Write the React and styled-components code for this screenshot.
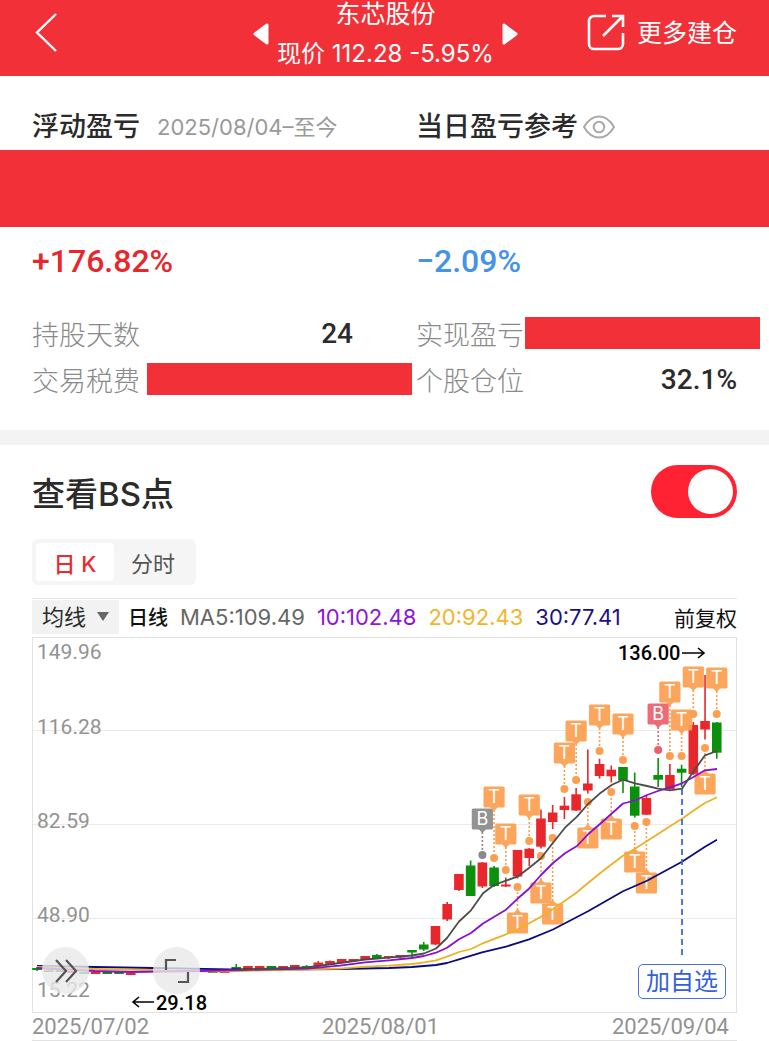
import { useState } from "react";
import styled, { createGlobalStyle } from "styled-components";

const RED = "#e8272c";
const GREEN = "#0a900a";
const ORANGE = "#fc9f50";
const STEP = 11.72;
const FIRST_X = 37;

const slotX = (slot) => FIRST_X + slot * STEP;

// slot, high, top, bottom, low, rising
const candles = [
  [0, 967, 968, 970, 971, 0],
  [1, 970, 970, 972, 972, 0],
  [2, 970, 970, 972, 972, 0],
  [3, 971, 971, 973, 973, 1],
  [4, 972, 972, 974, 974, 0],
  [5, 972, 972, 974, 974, 1],
  [6, 972, 972, 974, 974, 0],
  [7, 972, 972, 974, 974, 0],
  [8, 973, 973, 975, 975, 1],
  [15, 971, 971, 973, 973, 0],
  [16, 971, 971, 973, 973, 1],
  [17, 964, 967, 969, 969, 0],
  [18, 966, 966, 969, 969, 1],
  [19, 966, 966, 969, 969, 1],
  [20, 966, 966, 968, 968, 0],
  [21, 966, 966, 968, 968, 1],
  [22, 965, 965, 967, 967, 1],
  [23, 965, 966, 967, 968, 0],
  [24, 961, 962.5, 966, 966, 1],
  [25, 960.5, 961, 965, 965, 1],
  [26, 959, 959, 963, 963, 1],
  [27, 959, 959, 961, 962, 1],
  [28, 956, 956, 960, 960, 1],
  [29, 954, 955, 958.5, 959, 0],
  [30, 956, 956, 958, 959, 1],
  [31, 955, 955, 957.5, 959, 1],
  [32, 950, 950, 952.5, 958, 0],
  [33, 942, 944.5, 949.5, 951, 0],
  [34, 926, 926, 944.5, 945, 1],
  [35, 902, 904, 919.5, 921, 1],
  [36, 874, 874, 890, 891, 1],
  [37, 860.5, 865.5, 896, 896, 0],
  [38, 862, 862.5, 886.5, 888, 1],
  [39, 866, 867.5, 886, 887, 0],
  [40, 877.5, 884.5, 886.5, 887, 1],
  [41, 850, 850, 876.5, 878.5, 1],
  [42, 848, 848.7, 858, 866, 1],
  [43, 809.5, 818.5, 846.7, 848.5, 1],
  [44, 805, 812.5, 822, 829, 1],
  [45, 797, 805.7, 810, 819, 1],
  [46, 788, 794.3, 810.5, 811, 1],
  [47, 749.5, 783.5, 790.5, 793.5, 1],
  [48, 758.7, 764, 776, 778.5, 1],
  [49, 765.5, 769.7, 776.3, 782.5, 1],
  [50, 767, 767, 780.7, 793, 0],
  [51, 772.5, 786.5, 815.7, 817.5, 0],
  [52, 795, 798, 814.7, 815, 1],
  [53, 758, 775, 779.7, 787, 0],
  [54, 764, 775, 789, 790, 1],
  [55, 764.7, 768.7, 772.7, 787, 0],
  [56, 722, 725, 774, 775, 1],
  [57, 675, 721, 729.5, 739.5, 1],
  [58, 722, 722.5, 752.7, 758.7, 0],
];

const averages = [
  {
    color: "#0b0b7c",
    points:
      "37,966 95,967 153,968 230,969.3 280,969.7 340,969 389,968 412,967 436,965 447,963 459,959.3 482,952.3 506,946.7 529,939.3 553,929.5 565,923.3 588,911.3 623,891.3 647,880.7 682,861.7 705,846.7 717,839.7",
  },
  {
    color: "#ecb225",
    points:
      "37,967 95,969 150,970 213,971.5 240,971 340,968.7 365,966.7 389,965.7 412,964 424,962.3 436,960.3 447,956.7 459,952 471,949 482,943.7 506,934.3 518,929 529,923.3 541,916.7 553,909 565,900.7 577,892.3 588,883 600,873.3 612,864 623,855.7 635,848.7 658,834 670,826.3 682,818.7 693,811 705,803 717,797.3",
  },
  {
    color: "#8a0fd2",
    points:
      "37,968 95,971 131,972 200,971 240,970 307,968.7 340,965.7 365,962.3 389,960.3 412,958 424,956 436,952.7 447,947.7 459,939.3 471,933 483,923.5 506,909.7 518,898.3 529,888.7 541,875 553,863 565,853.3 577,846 588,834.3 600,824 623,803.5 635,800.5 647,795 658,791 670,787.3 682,783.3 693,777.3 705,770.3 717,769",
  },
  {
    color: "#4c4c4c",
    points:
      "240,969.7 307,967.5 340,963 365,959.5 389,957.7 412,955.5 424,953.5 436,948.5 447,938 459,921.5 471,910.3 483,893.3 494,885 506,880.7 518,876.3 529,868 541,858.3 553,842.7 565,827.7 577,816.7 588,804 600,793.3 612,784.7 623,779.7 635,783.3 647,786 658,788.7 670,790.3 682,788.7 693,772 705,755.3 717,751",
  },
];

const marks = [
  { slot: 38, box: 819, dot: 855, text: "B", color: "#8a8a8a" },
  { slot: 39, box: 797, dot: 858 },
  { slot: 40, box: 834, dot: 870 },
  { slot: 42, box: 805, dot: 841 },
  { slot: 41, box: 923, dot: 887 },
  { slot: 43, box: 893, dot: 856 },
  { slot: 44, box: 914, dot: 838 },
  { slot: 45, box: 753, dot: 789 },
  { slot: 46, box: 731, dot: 780 },
  { slot: 48, box: 715, dot: 751 },
  { slot: 50, box: 724, dot: 760 },
  { slot: 47, box: 838, dot: 802 },
  { slot: 49, box: 829, dot: 792 },
  { slot: 51, box: 862, dot: 826 },
  { slot: 52, box: 883, dot: 822 },
  { slot: 54, box: 692, dot: 756 },
  { slot: 53, box: 714, dot: 750, text: "B", color: "#ec5f6c" },
  { slot: 55, box: 720, dot: 756 },
  { slot: 56, box: 677, dot: 714 },
  { slot: 58, box: 678, dot: 714 },
  { slot: 57, box: 784, dot: 748 },
];

const scale = [
  ["149.96", 659],
  ["116.28", 734],
  ["82.59", 828],
  ["48.90", 922],
  ["15.22", 997],
];

const Mark = ({ slot, box, dot, text = "T", color = ORANGE }) => {
  const x = slotX(slot);
  const side = dot > box ? 1 : -1;
  const edge = box + side * 10;

  return (
    <g>
      <path d={`M${x} ${edge + side * 3}V${dot}`} stroke={color} strokeWidth="1.6" strokeDasharray="2 2" />
      <circle cx={x} cy={dot} r="4" fill={color} />
      <g opacity="0.92">
        <rect x={x - 10.6} y={box - 10.6} width="21.2" height="21.2" rx="1.5" fill={color} />
        <path d={`M${x - 4} ${edge}h8l-4 ${side * 4}z`} fill={color} />
      </g>
      <MarkText x={x} y={box + 6}>{text}</MarkText>
    </g>
  )
};

const Chart = () => (
  <ChartSvg viewBox="32 637 705 377">
    <path d="M32 730.5H736M32 824.5H736M32 918.5H736" stroke="#ebebeb" />
    <rect x="32.5" y="637.5" width="704" height="375" fill="none" stroke="#e2e2e2" />
    {candles.map(([slot, high, top, bottom, low, rising]) => (
      <g key={slot} fill={rising ? RED : GREEN}>
        <rect x={slotX(slot) - 0.8} y={high} width="1.6" height={low - high} />
        <rect x={slotX(slot) - 4.8} y={top} width="9.6" height={bottom - top} />
      </g>
    ))}
    {marks.map((mark) => (
      <Mark key={mark.slot} {...mark} />
    ))}
    {averages.map(({ color, points }) => (
      <polyline key={color} points={points} fill="none" stroke={color} strokeWidth="1.8" strokeLinejoin="round" />
    ))}
    <path d="M682 789V956" stroke="#3c66e0" strokeWidth="1.8" strokeDasharray="6 4" />
    {scale.map(([label, y]) => (
      <ScaleText key={label} x="37" y={y}>{label}</ScaleText>
    ))}
    <PeakText x="618" y="660">136.00</PeakText>
    <path d="M682 653H704M698 648l6 5-6 5" fill="none" stroke="#000" strokeWidth="1.6" />
    <PeakText x="156" y="1010">29.18</PeakText>
    <path d="M154 1002H133M139 997l-6 5 6 5" fill="none" stroke="#000" strokeWidth="1.6" />
  </ChartSvg>
);

const App = () => {
  const [showPoints, setShowPoints] = useState(true);
  const [period, setPeriod] = useState("day");

  return (
    <>
      <GlobalStyle />
      <Header>
        <HeaderSide>
          <IconButton aria-label="返回">
            <svg width="24" height="42" viewBox="0 0 24 42" fill="none" stroke="#fff" strokeWidth="2.4">
              <path d="M22 2 3 20.500 22 39" />
            </svg>
          </IconButton>
        </HeaderSide>
        <Stock>
          <IconButton aria-label="上一只">
            <svg width="16" height="22" viewBox="0 0 16 22" fill="#fff" stroke="#fff" strokeWidth="3" strokeLinejoin="round">
              <path d="M14 2v18L2 11z" />
            </svg>
          </IconButton>
          <StockText>
            <StockName>东芯股份</StockName>
            <StockPrice>现价 112.28 -5.95%</StockPrice>
          </StockText>
          <IconButton aria-label="下一只">
            <svg width="16" height="22" viewBox="0 0 16 22" fill="#fff" stroke="#fff" strokeWidth="3" strokeLinejoin="round">
              <path d="M2 2v18l12-9z" />
            </svg>
          </IconButton>
        </Stock>
        <HeaderSide $end>
          <MoreButton>
            <svg width="38" height="38" viewBox="0 0 38 38" fill="none" stroke="#fff" strokeWidth="2.6">
              <path d="M19 2H7a5 5 0 0 0-5 5v23a5 5 0 0 0 5 5h24a5 5 0 0 0 5-5V19" />
              <path d="M25 2h11v11M36 2 16 22" />
            </svg>
            更多建仓
          </MoreButton>
        </HeaderSide>
      </Header>

      <Columns $top={35}>
        <Heading>
          浮动盈亏
          <DateRange>2025/08/04–至今</DateRange>
        </Heading>
        <Heading>
          当日盈亏参考
          <IconButton aria-label="隐藏金额">
            <svg width="32" height="24" viewBox="0 0 32 24" fill="none" stroke="#a9a9a9" strokeWidth="2">
              <path d="M1 12C5 5 10 1.500 16 1.500S27 5 31 12C27 19 22 22.500 16 22.500S5 19 1 12z" />
              <circle cx="16" cy="12" r="5.300" />
            </svg>
          </IconButton>
        </Heading>
      </Columns>
      <Banner />
      <Columns $top={14}>
        <Percent $color={RED}>+176.82%</Percent>
        <Percent $color="#4593e6">−2.09%</Percent>
      </Columns>
      <Columns $top={29}>
        <Stat>
          <StatLabel>持股天数</StatLabel>
          <StatValue>24</StatValue>
        </Stat>
        <Stat>
          <StatLabel>实现盈亏</StatLabel>
          <Cover $start={1} $bleed={23} />
        </Stat>
        <Stat>
          <StatLabel>交易税费</StatLabel>
          <Cover $start={7} $bleed={59} />
        </Stat>
        <Stat>
          <StatLabel>个股仓位</StatLabel>
          <StatValue>32.1%</StatValue>
        </Stat>
      </Columns>
      <Divider />

      <Section>
        <SwitchRow>
          查看BS点
          <Switch
            type="checkbox"
            role="switch"
            checked={showPoints}
            onChange={() => setShowPoints(!showPoints)}
          />
        </SwitchRow>
        <Tabs>
          <Tab $active={period === "day"} onClick={() => setPeriod("day")}>日 K</Tab>
          <Tab $active={period === "time"} onClick={() => setPeriod("time")}>分时</Tab>
        </Tabs>
        <Legend>
          <SelectBox>
            <Select aria-label="指标">
              <option>均线</option>
            </Select>
            <svg width="12" height="9" viewBox="0 0 12 9" fill="#666">
              <path d="M0 0h12L6 9z" />
            </svg>
          </SelectBox>
          <LegendTitle>日线</LegendTitle>
          <Average $color="#666">MA5:109.49</Average>
          <Average $color="#9013dc">10:102.48</Average>
          <Average $color="#efb62c">20:92.43</Average>
          <Average $color="#1b1287">30:77.41</Average>
          <Adjust>前复权</Adjust>
        </Legend>
        <ChartArea>
          <Chart />
          <RoundButton $left={10} aria-label="展开">
            <svg width="24" height="24" viewBox="0 0 24 24" fill="none" stroke="#555" strokeWidth="2.2">
              <path d="M2 1l10 11L2 23M12 1l10 11-10 11" />
            </svg>
          </RoundButton>
          <RoundButton $left={121} aria-label="全屏">
            <svg width="26" height="26" viewBox="0 0 26 26" fill="none" stroke="#555" strokeWidth="2.200">
              <path d="M2 12V2h10M24 14v10H14" />
            </svg>
          </RoundButton>
          <AddButton>加自选</AddButton>
        </ChartArea>
        <Dates>
          <span>2025/07/02</span>
          <span>2025/08/01</span>
          <span>2025/09/04</span>
        </Dates>
      </Section>
    </>
  )
};

const GlobalStyle = createGlobalStyle`
  * {
    box-sizing: border-box;
  }

  body {
    margin: 0;
    background: #fff;
    color: #2b2b2b;
    font-family: Inter, "Noto Sans CJK SC", sans-serif;
  }

  button, select {
    margin: 0;
    padding: 0;
    border: 0;
    background: none;
    color: inherit;
    font: inherit;
    cursor: pointer;
  }

  svg {
    display: block;
  }
`;

const Header = styled.header`
  display: flex;
  align-items: center;
  height: 76px;
  padding: 0 32px;
  background: #f23037;
  color: #fff;
`;

const HeaderSide = styled.div`
  flex: 1;
  display: flex;
  justify-content: ${({ $end }) => ($end ? "flex-end" : "flex-start")};
  padding-left: ${({ $end }) => ($end ? 0 : 2)}px;
  padding-bottom: 10px;
`;

const IconButton = styled.button`
  display: flex;
`;

const Stock = styled.div`
  display: flex;
  align-items: center;
  gap: 8px;
  padding-bottom: 8px;
`;

const StockText = styled.div`
  text-align: center;
  white-space: nowrap;
`;

const StockName = styled.h1`
  margin: 0;
  font-size: 25px;
  font-weight: 400;
  line-height: 40px;
`;

const StockPrice = styled.p`
  margin: 0;
  font-size: 24px;
  line-height: 40px;
`;

const MoreButton = styled.button`
  display: flex;
  align-items: center;
  gap: 12px;
  font-size: 25px;
  line-height: 38px;
  white-space: nowrap;
`;

const Columns = styled.div`
  display: grid;
  grid-template-columns: 1fr 1fr;
  column-gap: 63px;
  padding: ${({ $top }) => $top}px 32px 0;
`;

const Heading = styled.h2`
  display: flex;
  align-items: center;
  gap: 5px;
  margin: 0 0 7px;
  font-size: 27px;
  font-weight: 500;
  line-height: 32px;
  white-space: nowrap;
`;

const DateRange = styled.span`
  margin-left: 12px;
  color: #999;
  font-size: 22px;
  font-weight: 400;
`;

const Banner = styled.div`
  height: 77px;
  background: #f23037;
`;

const Percent = styled.p`
  margin: 0;
  color: ${({ $color }) => $color};
  font-family: Roboto, sans-serif;
  font-size: 32px;
  font-weight: 500;
  line-height: 40px;
`;

const Stat = styled.div`
  display: flex;
  align-items: center;
  height: 46px;
`;

const StatLabel = styled.span`
  color: #8a8a8a;
  font-size: 27px;
  font-weight: 300;
  white-space: nowrap;
`;

const StatValue = styled.span`
  margin-left: auto;
  font-family: Roboto, sans-serif;
  font-size: 28px;
  font-weight: 500;
`;

const Cover = styled.div`
  flex: 1;
  height: 32px;
  margin-left: ${({ $start }) => $start}px;
  margin-right: -${({ $bleed }) => $bleed}px;
  background: #f23037;
`;

const Divider = styled.div`
  height: 15px;
  margin-top: 28px;
  background: #f3f3f3;
`;

const Section = styled.section`
  padding: 20px 32px 0;
`;

const SwitchRow = styled.label`
  display: flex;
  align-items: center;
  justify-content: space-between;
  font-size: 33px;
  font-weight: 500;
`;

const Switch = styled.input`
  appearance: none;
  display: flex;
  align-items: center;
  justify-content: flex-end;
  width: 86px;
  height: 53px;
  margin: 0;
  padding: 4px;
  border-radius: 27px;
  background: #ff2233;
  cursor: pointer;

  &::before {
    content: "";
    width: 45px;
    height: 45px;
    border-radius: 50%;
    background: #fff;
  }

  &:not(:checked) {
    justify-content: flex-start;
    background: #ccc;
  }
`;

const Tabs = styled.div`
  display: inline-flex;
  height: 46px;
  margin-top: 21px;
  padding: 4px;
  border-radius: 6px;
  background: #f5f5f5;
`;

const Tab = styled.button`
  width: 78px;
  border-radius: 4px;
  background: ${({ $active }) => ($active ? "#fff" : "none")};
  color: ${({ $active }) => ($active ? "#ea2a30" : "#555")};
  font-size: 22px;
  font-weight: ${({ $active }) => ($active ? 500 : 400)};
`;

const Legend = styled.div`
  display: flex;
  align-items: center;
  height: 39px;
  margin-top: 13px;
  padding-bottom: 3px;
  border-top: 1px solid #e8e8e8;
  white-space: nowrap;
`;

const SelectBox = styled.div`
  display: flex;
  align-items: center;
  height: 34px;
  padding: 0 10px;
  background: #f2f2f2;

  svg {
    margin-left: 10px;
    pointer-events: none;
  }
`;

const Select = styled.select`
  appearance: none;
  font-size: 22px;
`;

const LegendTitle = styled.span`
  margin-left: 9px;
  color: #111;
  font-size: 20px;
  font-weight: 500;
`;

const Average = styled.span`
  margin-left: 12px;
  color: ${({ $color }) => $color};
  font-size: 22px;
`;

const Adjust = styled.button`
  margin-left: auto;
  color: #111;
  font-size: 21px;
`;

const ChartArea = styled.div`
  position: relative;
`;

const ChartSvg = styled.svg`
  width: 100%;
  font-family: Roboto, sans-serif;
`;

const MarkText = styled.text`
  fill: #fff;
  font-family: Inter, sans-serif;
  font-size: 18px;
  text-anchor: middle;
`;

const ScaleText = styled.text`
  fill: #929292;
  font-size: 21px;
`;

const PeakText = styled.text`
  fill: #000;
  font-size: 20px;
  font-weight: 500;
`;

const RoundButton = styled.button`
  position: absolute;
  left: ${({ $left }) => $left}px;
  bottom: 20px;
  display: flex;
  align-items: center;
  justify-content: center;
  width: 47px;
  height: 47px;
  border-radius: 50%;
  background: rgba(232, 232, 232, 0.8);
`;

const AddButton = styled.button`
  position: absolute;
  right: 11px;
  bottom: 15px;
  width: 88px;
  height: 35px;
  border: 1px solid #4a70dd;
  border-radius: 5px;
  background: #fff;
  color: #3560dc;
  font-size: 24px;
  line-height: 32px;
`;

const Dates = styled.div`
  display: flex;
  justify-content: space-between;
  padding-right: 8px;
  border-bottom: 1px solid #e2e2e2;
  color: #929292;
  font-family: Roboto, sans-serif;
  font-size: 22px;
  line-height: 26px;
`;

export default App;
